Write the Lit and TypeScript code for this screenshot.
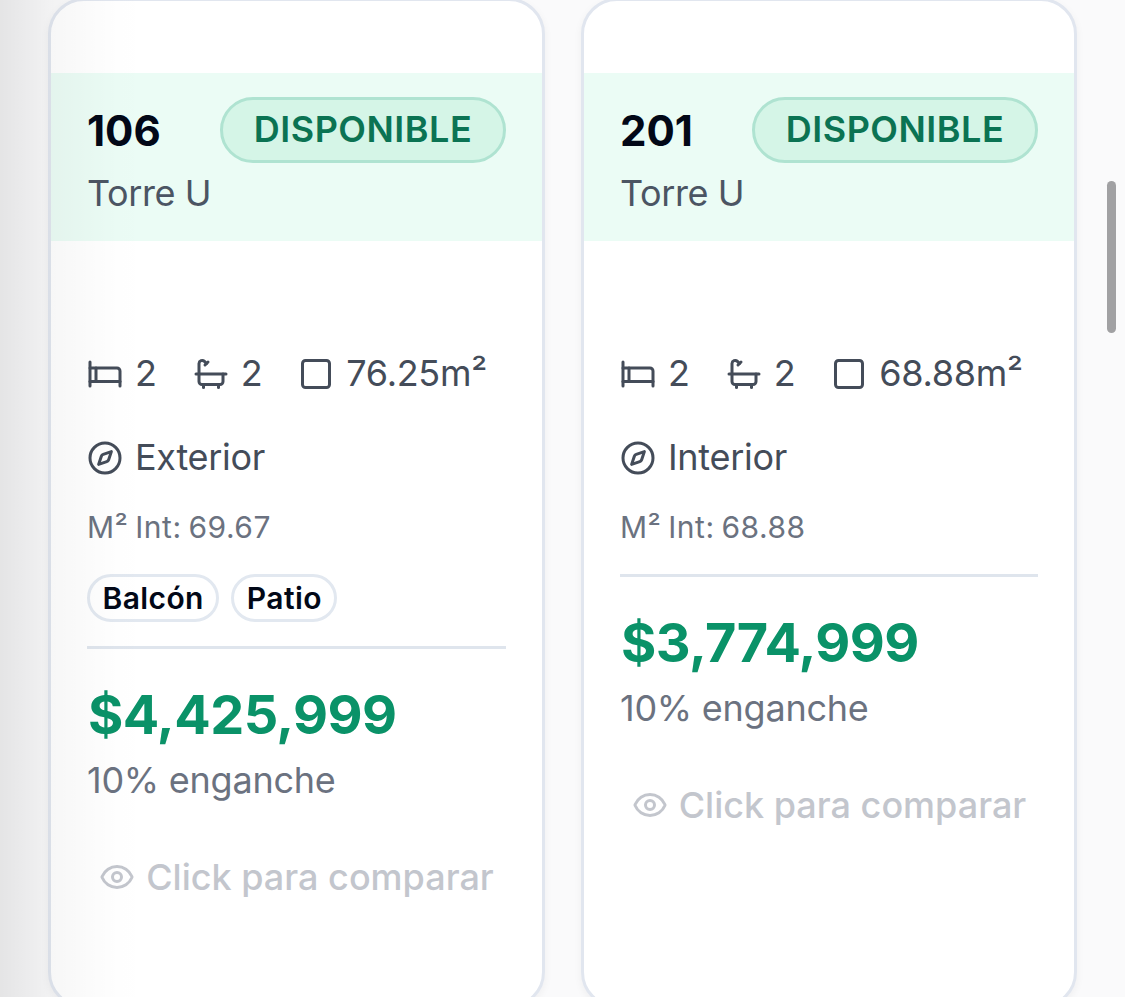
import {LitElement, css, html, svg, nothing} from "lit";
import {customElement, property} from "lit/decorators.js";

interface Unit {
  number: string;
  tower: string;
  status: string;
  bedrooms: number;
  bathrooms: number;
  area: string;
  orientation: string;
  interior: string;
  extras: string[];
  price: string;
  deposit: string;
}

const units: Unit[] = [
  {
    number: "106",
    tower: "Torre U",
    status: "DISPONIBLE",
    bedrooms: 2,
    bathrooms: 2,
    area: "76.25m²",
    orientation: "Exterior",
    interior: "69.67",
    extras: ["Balcón", "Patio"],
    price: "$4,425,999",
    deposit: "10% enganche"
  },
  {
    number: "201",
    tower: "Torre U",
    status: "DISPONIBLE",
    bedrooms: 2,
    bathrooms: 2,
    area: "68.88m²",
    orientation: "Interior",
    interior: "68.88",
    extras: [],
    price: "$3,774,999",
    deposit: "10% enganche"
  }
];

const icons = {
  bed: svg`<path d="M2 4v16"/><path d="M2 8h18a2 2 0 0 1 2 2v10"/><path d="M2 17h20"/><path d="M6 8v9"/>`,
  bath: svg`
    <path d="M10 4 8 6"/><path d="M17 19v2"/><path d="M2 12h20"/><path d="M7 19v2"/>
    <path d="M9 5 7.621 3.621A2.121 2.121 0 0 0 4 5v12a2 2 0 0 0 2 2h12a2 2 0 0 0 2-2v-5"/>`,
  square: svg`<rect x="3" y="3" width="18" height="18" rx="2"/>`,
  compass: svg`
    <circle cx="12" cy="12" r="10"/>
    <path d="m16.24 7.76-1.804 5.411a2 2 0 0 1-1.265 1.265L7.76 16.24l1.804-5.411a2 2 0 0 1 1.265-1.265z"/>`,
  eye: svg`
    <path d="M2.062 12.348a1 1 0 0 1 0-.696 10.75 10.75 0 0 1 19.876 0 1 1 0 0 1 0 .696 10.75 10.75 0 0 1-19.876 0"/>
    <circle cx="12" cy="12" r="3"/>`
};

@customElement("unit-icon")
export class UnitIcon extends LitElement {
  static styles = css`
    :host {
      display: block;
      flex: none;
      width: 36px;
      height: 36px;
    }
    svg {
      display: block;
      width: 100%;
      height: 100%;
      fill: none;
      stroke: currentColor;
      stroke-width: 2;
      stroke-linecap: round;
      stroke-linejoin: round;
    }
  `;

  @property() name: keyof typeof icons = "square";

  render() {
    return html`<svg viewBox="0 0 24 24">${icons[this.name]}</svg>`;
  }
}

@customElement("unit-card")
export class UnitCard extends LitElement {
  static styles = css`
    :host {
      display: flex;
      flex-direction: column;
      box-sizing: border-box;
      padding: 72px 0;
      border: 3px solid #e1e6ef;
      border-radius: 36px;
      background: #fff;
      box-shadow: 0 3px 9px rgba(15, 23, 42, 0.05);
      overflow: hidden;
      white-space: nowrap;
    }
    .header {
      box-sizing: border-box;
      height: 168px;
      padding: 24px 36px;
      background: #ebfcf5;
    }
    .title {
      display: flex;
      align-items: center;
      justify-content: space-between;
    }
    .number {
      padding-top: 2px;
      color: #020817;
      font-size: 42px;
      font-weight: 700;
      line-height: 60px;
    }
    .status {
      box-sizing: border-box;
      width: 286px;
      height: 66px;
      border: 3px solid #afe3d1;
      border-radius: 33px;
      background: #d5f5e7;
      color: #0b7353;
      font-size: 36px;
      font-weight: 600;
      letter-spacing: 0.5px;
      line-height: 59px;
      text-align: center;
    }
    .tower {
      margin-top: 6px;
      color: #4b5563;
      font-size: 36px;
      letter-spacing: -0.4px;
      line-height: 48px;
    }
    .content {
      padding: 109px 36px 0;
    }
    .specs,
    .spec {
      display: flex;
      align-items: center;
    }
    .specs {
      gap: 36px;
      margin-bottom: 36px;
    }
    .spec {
      gap: 12px;
      color: #444c59;
      font-size: 36px;
      letter-spacing: -0.3px;
      line-height: 48px;
    }
    .spec span {
      height: 50px;
    }
    .specs .spec,
    .spec {
      height: 48px;
    }
    .interior {
      margin-top: 23px;
      color: #6b7280;
      font-size: 30px;
      letter-spacing: 0.5px;
      word-spacing: -2px;
      line-height: 45px;
    }
    .extras {
      display: flex;
      gap: 12px;
      margin-top: 24px;
    }
    .extra {
      box-sizing: border-box;
      height: 48px;
      padding: 0 12.5px;
      border: 3px solid #e2e8f0;
      border-radius: 24px;
      color: #020817;
      font-size: 30px;
      font-weight: 600;
      letter-spacing: 0.4px;
      line-height: 43px;
    }
    .pricing {
      margin-top: 24px;
      padding-top: 24px;
      border-top: 3px solid #dfe5ed;
    }
    .price {
      padding-left: 1px;
      color: #0a9268;
      font-size: 54px;
      font-weight: 700;
      letter-spacing: -0.6px;
      line-height: 83px;
      height: 84px;
    }
    .deposit {
      color: #6b7280;
      font-size: 36px;
      letter-spacing: -0.25px;
      line-height: 47px;
      height: 48px;
    }
    .compare {
      display: flex;
      align-items: center;
      justify-content: center;
      gap: 11px;
      margin-top: 48px;
      color: #c3c6cd;
      font-size: 36px;
      font-weight: 500;
      line-height: 48px;
    }
  `;

  @property({attribute: false}) unit!: Unit;

  _renderSpec(icon: string, text: string | number) {
    return html`<div class="spec"><unit-icon name=${icon}></unit-icon><span>${text}</span></div>`;
  }

  _renderExtras(extras: string[]) {
    if (!extras.length) return nothing;
    return html`<div class="extras">${extras.map((extra) => html`<span class="extra">${extra}</span>`)}</div>`;
  }

  render() {
    const {unit} = this;
    return html`
      <div class="header">
        <div class="title">
          <span class="number">${unit.number}</span>
          <span class="status">${unit.status}</span>
        </div>
        <div class="tower">${unit.tower}</div>
      </div>
      <div class="content">
        <div class="specs">
          ${this._renderSpec("bed", unit.bedrooms)}
          ${this._renderSpec("bath", unit.bathrooms)}
          ${this._renderSpec("square", unit.area)}
        </div>
        ${this._renderSpec("compass", unit.orientation)}
        <div class="interior">M² Int: ${unit.interior}</div>
        ${this._renderExtras(unit.extras)}
        <div class="pricing">
          <div class="price">${unit.price}</div>
          <div class="deposit">${unit.deposit}</div>
        </div>
        <div class="compare"><unit-icon name="eye"></unit-icon><span>Click para comparar</span></div>
      </div>
    `;
  }
}

@customElement("app-root")
export class AppRoot extends LitElement {
  static styles = css`
    :host {
      display: block;
      position: relative;
      height: 997px;
      overflow: hidden;
      background: #fafafb;
      font-family: Inter, "Liberation Sans", sans-serif;
    }
    .grid {
      display: grid;
      grid-template-columns: 497px 496px;
      gap: 36px;
      height: 1010px;
      margin-top: -2px;
      padding-left: 48px;
    }
    .edge {
      position: absolute;
      inset: 0 auto 0 0;
      width: 150px;
      background: linear-gradient(to right, rgba(0, 0, 0, 0.085), rgba(0, 0, 0, 0.03) 34%, rgba(0, 0, 0, 0.005) 80%, transparent);
    }
    .scrollbar {
      position: absolute;
      top: 181px;
      right: 9px;
      width: 9px;
      height: 152px;
      border-radius: 5px;
      background: #a1a1a3;
    }
  `;

  render() {
    return html`
      <div class="grid">${units.map((unit) => html`<unit-card .unit=${unit}></unit-card>`)}</div>
      <div class="edge"></div>
      <div class="scrollbar"></div>
    `;
  }
}
